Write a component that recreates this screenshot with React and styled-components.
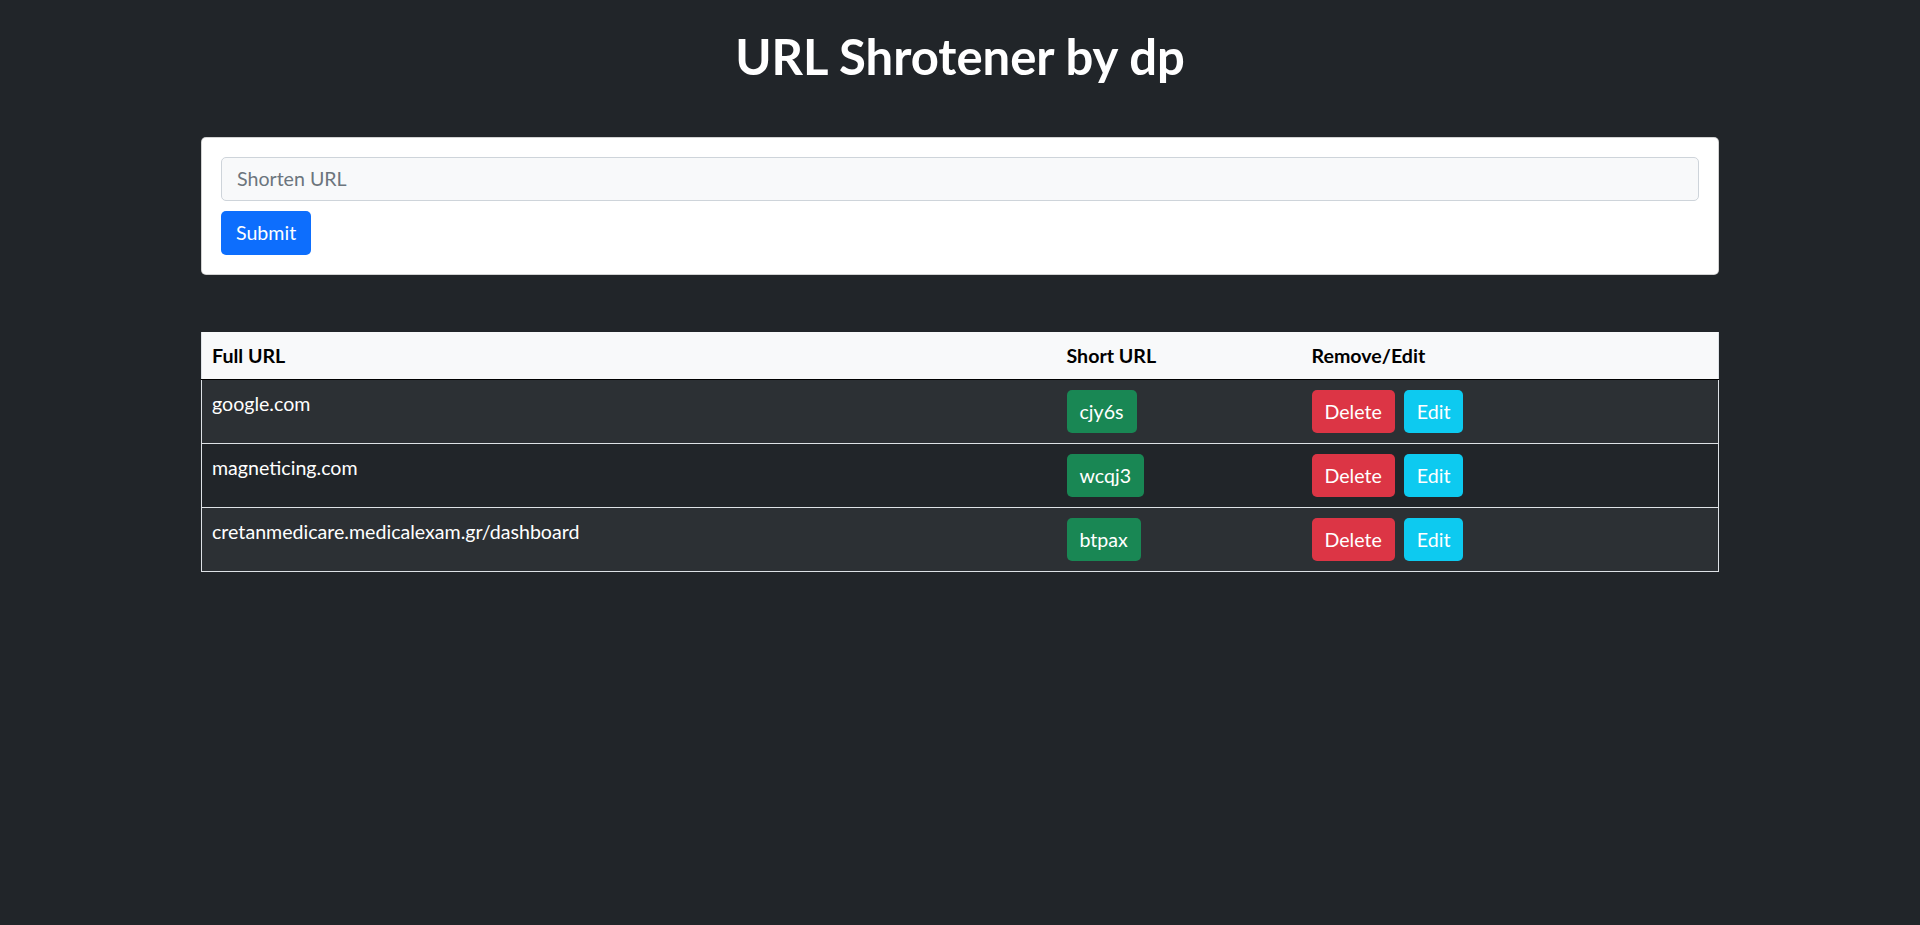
import React from "react";
import styled, { createGlobalStyle } from "styled-components";

const GlobalStyle = createGlobalStyle`
  html, body {
    margin: 0;
    padding: 0;
    background-color: #212529;
  }
  body {
    font-family: Lato, "Noto Sans", Arial, sans-serif;
    font-size: 19.6px;
    line-height: 1.5;
    color: #ffffff;
  }
  * {
    box-sizing: border-box;
  }
`;

const links = [
  { id: 1, full: "google.com", short: "cjy6s" },
  { id: 2, full: "magneticing.com", short: "wcqj3" },
  { id: 3, full: "cretanmedicare.medicalexam.gr/dashboard", short: "btpax" },
];

const App = () => {
  return (
    <>
      <GlobalStyle />
      <StyledPage>
        <StyledTitle>URL Shrotener by dp</StyledTitle>
        <StyledCard>
          <StyledForm onSubmit={(e) => e.preventDefault()}>
            <StyledInput placeholder="Shorten URL" />
            <StyledButton variant="primary" type="submit" $wide>
              Submit
            </StyledButton>
          </StyledForm>
        </StyledCard>
        <StyledTable>
          <thead>
            <tr>
              <StyledHeadCell width="855">Full URL</StyledHeadCell>
              <StyledHeadCell width="245">Short URL</StyledHeadCell>
              <StyledHeadCell>Remove/Edit</StyledHeadCell>
            </tr>
          </thead>
          <tbody>
            {links.map((link, i) => (
              <StyledRow key={link.id} $striped={i % 2 === 0}>
                <StyledCell>{link.full}</StyledCell>
                <StyledCell>
                  <StyledButton variant="success">{link.short}</StyledButton>
                </StyledCell>
                <StyledCell>
                  <StyledActions>
                    <StyledButton variant="danger">Delete</StyledButton>
                    <StyledButton variant="info">Edit</StyledButton>
                  </StyledActions>
                </StyledCell>
              </StyledRow>
            ))}
          </tbody>
        </StyledTable>
      </StyledPage>
    </>
  );
};

const colors = {
  primary: { bg: "#0d6efd", fg: "#ffffff" },
  success: { bg: "#198754", fg: "#ffffff" },
  danger: { bg: "#dc3545", fg: "#ffffff" },
  info: { bg: "#0dcaf0", fg: "#ffffff" },
};

const StyledPage = styled.div`
  width: 1518px;
  margin: 0 auto;
  padding-top: 27px;
`;

const StyledTitle = styled.h1`
  margin: 0;
  text-align: center;
  font-size: 49px;
  font-weight: 700;
  line-height: 1.2;
  color: #ffffff;
`;

const StyledCard = styled.div`
  margin-top: 51px;
  background-color: #ffffff;
  border: 1px solid rgba(0, 0, 0, 0.175);
  border-radius: 5px;
  padding: 19px;
`;

const StyledForm = styled.form`
  display: flex;
  flex-direction: column;
  align-items: flex-start;
  gap: 10px;
`;

const StyledInput = styled.input`
  width: 100%;
  height: 44px;
  padding: 7px 15px;
  font-family: inherit;
  font-size: 19.6px;
  color: #212529;
  background-color: #f8f9fa;
  border: 1px solid #ced4da;
  border-radius: 5px;
  outline: 0;
  &::placeholder {
    color: #6c757d;
  }
`;

const StyledButton = styled.button`
  display: inline-flex;
  align-items: center;
  justify-content: center;
  height: ${({ $wide }) => ($wide ? "44px" : "43px")};
  padding: 0 ${({ $wide }) => ($wide ? "15px" : "13px")};
  font-family: inherit;
  font-size: 19.6px;
  line-height: 1.5;
  border: 0;
  border-radius: 5px;
  cursor: pointer;
  background-color: ${({ variant }) => colors[variant].bg};
  color: ${({ variant }) => colors[variant].fg};
`;

const StyledTable = styled.table`
  margin-top: 57px;
  width: 100%;
  border-collapse: collapse;
  border-left: 1px solid #dee2e6;
  border-right: 1px solid #dee2e6;
`;

const StyledHeadCell = styled.th`
  width: ${({ width }) => (width ? `${width}px` : "auto")};
  height: 48px;
  padding: 0 10px;
  text-align: left;
  font-weight: 700;
  color: #000000;
  background-color: #f8f9fa;
  border-bottom: 1px solid #000000;
`;

const StyledRow = styled.tr`
  background-color: ${({ $striped }) => ($striped ? "#2c3034" : "#212529")};
  border-bottom: 1px solid #dee2e6;
`;

const StyledCell = styled.td`
  padding: 10px;
  vertical-align: top;
  color: #ffffff;
  line-height: 1.45;
`;

const StyledActions = styled.div`
  display: flex;
  gap: 9px;
`;

export default App;
